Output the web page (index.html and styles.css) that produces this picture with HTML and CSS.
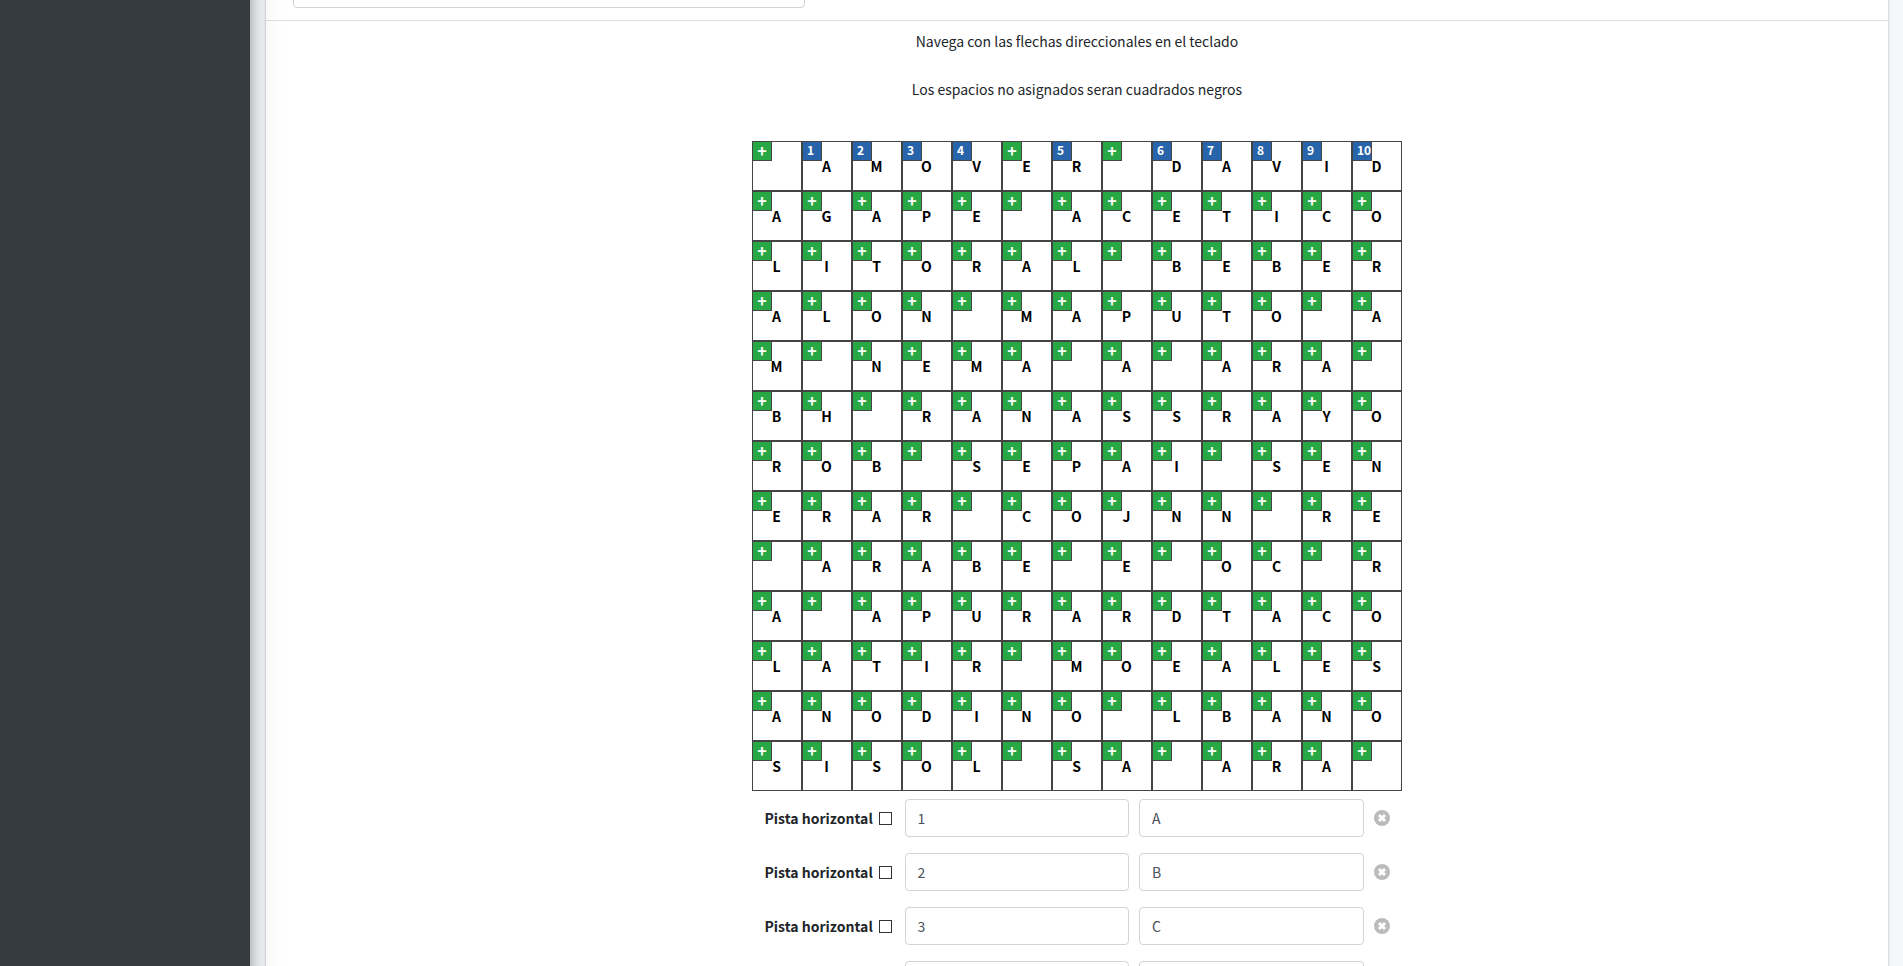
FILE: index.html
```html
<!DOCTYPE html>
<html lang="es">
<head>
<meta charset="utf-8">
<title>Crucigrama</title>
<link rel="stylesheet" href="styles.css">
</head>
<body>
<div class="shell">
  <aside class="sidebar"></aside>
  <main class="content">
    <section class="card">
      <header class="card-header">
        <input class="field title-field" type="text" aria-label="Nombre">
      </header>
      <div class="card-body">
        <p class="hint">Navega con las flechas direccionales en el teclado</p>
        <p class="hint">Los espacios no asignados seran cuadrados negros</p>
        <div class="board" id="board"></div>
        <div class="clues" id="clues"></div>
      </div>
    </section>
  </main>
</div>
<script src="app.js"></script>
</body>
</html>
```
FILE: styles.css
```css
* { box-sizing: border-box; }
body {
  margin: 0;
  background: #f4f6f9;
  color: #212529;
  font-family: "Source Sans Pro", "Noto Sans CJK SC", "Open Sans", sans-serif;
  font-size: 14px;
  line-height: 24px;
}
input, button { font-family: inherit; }
.shell { display: flex; height: 100vh; overflow: hidden; }
.sidebar {
  flex: 0 0 250px;
  z-index: 2;
  margin: -60px 0;
  background: #343a40;
  box-shadow: 0 14px 28px rgba(0, 0, 0, .25), 0 10px 10px rgba(0, 0, 0, .22);
}
.content { flex: 1; padding: 0 15px 0 16px; }
.card {
  min-height: 100%;
  background: #fff;
  box-shadow: 0 0 0 1px #d9dce2, 0 1px 3px rgba(0, 0, 0, .2);
}
.card-header {
  padding: 0 27px 12px;
  border-bottom: 1px solid #dfdfdf;
}
.card-body { padding-top: 8px; }
.field {
  height: 38px;
  min-width: 0;
  padding: 0 12px;
  border: 1px solid #ced4da;
  border-radius: 4px;
  background: #fff;
  color: #495057;
  font-size: 14px;
}
.title-field { display: block; width: 512px; margin-top: -30px; }
.hint { margin: 0 0 24px; text-align: center; }
.board {
  display: grid;
  grid-template-columns: repeat(13, 50px);
  justify-content: center;
  margin-top: 40px;
}
.cell {
  position: relative;
  height: 50px;
  border: 1px solid #444;
}
.letter {
  display: block;
  width: 100%;
  height: 100%;
  padding: 0 1px 0 0;
  border: 0;
  background: transparent;
  color: #000;
  font-size: 14px;
  font-weight: 700;
  text-align: center;
}
.badge {
  position: absolute;
  top: -1px;
  left: -1px;
  width: 20px;
  height: 20px;
  padding: 0 0 2px;
  border: 1px solid #444;
  background: #28a745;
  color: #fff;
  font-size: 16px;
  font-weight: 700;
  line-height: 16px;
  text-align: center;
}
.badge.number {
  padding-left: 4px;
  background: #2864aa;
  font-size: 12px;
  text-align: left;
}
.clues {
  display: flex;
  flex-direction: column;
  gap: 16px;
  width: 625px;
  margin: 8px auto 0;
}
.clue { display: flex; align-items: center; gap: 10px; }
.clue-kind {
  display: flex;
  align-items: center;
  justify-content: space-between;
  flex: 0 0 130px;
  padding-right: 3px;
  font-weight: 700;
}
.check {
  appearance: none;
  width: 13px;
  height: 13px;
  margin: 0;
  border: 1px solid #333;
  background: #fff;
}
.check:checked { background: #333; }
.clue .field { flex: 1; }
.remove {
  display: block;
  width: 16px;
  height: 16px;
  padding: 0;
  border: 0;
  background: none;
}
.remove svg { display: block; width: 16px; height: 16px; }
```
FILE: app.js
```js
const rows = [
  " AMOVER DAVID",
  "AGAPE ACETICO",
  "LITORAL BEBER",
  "ALON MAPUTO A",
  "M NEMA A ARA ",
  "BH RANASSRAYO",
  "ROB SEPAI SEN",
  "ERAR COJNN RE",
  " ARABE E OC R",
  "A APURARDTACO",
  "LATIR MOEALES",
  "ANODINO LBANO",
  "SISOL SA ARA "
];
// Clue number by column of the first row
const numbers = { 1: 1, 2: 2, 3: 3, 4: 4, 6: 5, 8: 6, 9: 7, 10: 8, 11: 9, 12: 10 };

const board = document.getElementById("board");
board.innerHTML = rows.map((row, r) => [...row].map((letter, c) => {
  const number = r === 0 && numbers[c];
  return `<div class="cell">
    <input class="letter" maxlength="1" value="${letter.trim()}" aria-label="Fila ${r + 1}, columna ${c + 1}">
    <button type="button" class="badge${number ? " number" : ""}">${number || "+"}</button>
  </div>`;
}).join("")).join("");

const clues = [[1, "A"], [2, "B"], [3, "C"], [4, "D"]];
document.getElementById("clues").innerHTML = clues.map(([n, text]) => `<div class="clue">
  <label class="clue-kind">Pista horizontal<input class="check" type="checkbox"></label>
  <input class="field" type="text" value="${n}" aria-label="Número">
  <input class="field" type="text" value="${text}" aria-label="Pista">
  <button type="button" class="remove" aria-label="Quitar">
    <svg viewBox="0 0 16 16"><circle cx="8" cy="8" r="8" fill="#bbb"/><path d="M5 5l6 6M11 5l-6 6" stroke="#fff" stroke-width="3"/></svg>
  </button>
</div>`).join("");
```
